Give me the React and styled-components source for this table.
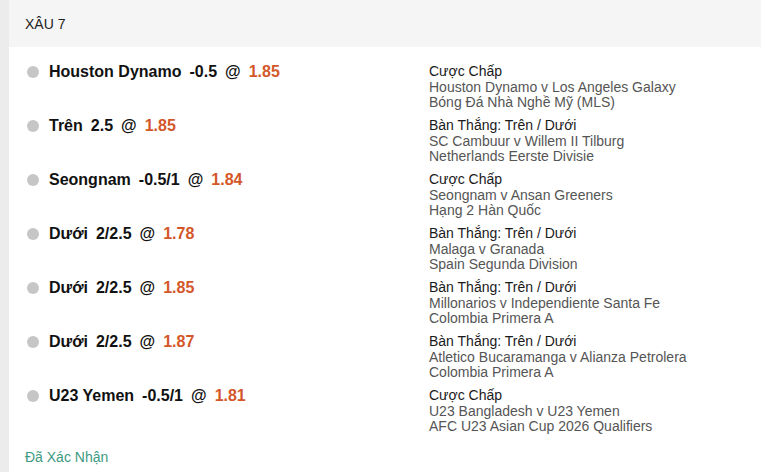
import styled, { createGlobalStyle } from "styled-components";

const GlobalStyle = createGlobalStyle`
    body {
        margin: 0;
        background: #ffffff;
        font-family: "Liberation Sans", Arial, sans-serif;
    }
`;

const Page = styled.div`
    display: flex;
    min-height: 472px;
`;

const Strip = styled.div`
    width: 9px;
    flex-shrink: 0;
    background-color: #ececec;
`;

const Main = styled.div`
    flex: 1;
    display: flex;
    flex-direction: column;
    background-color: #ffffff;
`;

const Header = styled.div`
    height: 47px;
    display: flex;
    align-items: center;
    padding-left: 16px;
    background-color: #f5f5f5;
    font-size: 14px;
    color: #222222;
`;

const List = styled.div`
    display: flex;
    flex-direction: column;
    gap: 7.5px;
    padding: 17px 0 0 18px;
`;

const Row = styled.div`
    display: grid;
    grid-template-columns: 402px 1fr;
    align-items: start;
`;

const Selection = styled.div`
    display: flex;
    align-items: center;
    height: 15px;
    font-size: 16px;
    font-weight: 700;
    color: #111111;
    white-space: nowrap;
`;

const Dot = styled.span`
    width: 12px;
    height: 12px;
    border-radius: 50%;
    background-color: #c6c6c6;
    margin-right: 10px;
    flex-shrink: 0;
`;

const Part = styled.span`
    margin-left: ${(p) => (p.$first ? 0 : 8)}px;
    color: ${(p) => (p.$odds ? "#d4572a" : "inherit")};
`;

const Info = styled.div`
    display: flex;
    flex-direction: column;
    font-size: 14px;
    line-height: 15.5px;
    color: #555555;
`;

const Market = styled.span`
    color: #1a1a1a;
`;

const Footer = styled.div`
    padding: 14px 0 0 16px;
    font-size: 14px;
    color: #3d9a82;
`;

const bets = [
    { team: "Houston Dynamo", line: "-0.5", odds: "1.85", market: "Cược Chấp", match: "Houston Dynamo v Los Angeles Galaxy", league: "Bóng Đá Nhà Nghề Mỹ (MLS)" },
    { team: "Trên", line: "2.5", odds: "1.85", market: "Bàn Thắng: Trên / Dưới", match: "SC Cambuur v Willem II Tilburg", league: "Netherlands Eerste Divisie" },
    { team: "Seongnam", line: "-0.5/1", odds: "1.84", market: "Cược Chấp", match: "Seongnam v Ansan Greeners", league: "Hạng 2 Hàn Quốc" },
    { team: "Dưới", line: "2/2.5", odds: "1.78", market: "Bàn Thắng: Trên / Dưới", match: "Malaga v Granada", league: "Spain Segunda Division" },
    { team: "Dưới", line: "2/2.5", odds: "1.85", market: "Bàn Thắng: Trên / Dưới", match: "Millonarios v Independiente Santa Fe", league: "Colombia Primera A" },
    { team: "Dưới", line: "2/2.5", odds: "1.87", market: "Bàn Thắng: Trên / Dưới", match: "Atletico Bucaramanga v Alianza Petrolera", league: "Colombia Primera A" },
    { team: "U23 Yemen", line: "-0.5/1", odds: "1.81", market: "Cược Chấp", match: "U23 Bangladesh v U23 Yemen", league: "AFC U23 Asian Cup 2026 Qualifiers" },
];

function App() {
    return (
        <>
            <GlobalStyle />
            <Page>
                <Strip />
                <Main>
                    <Header>XÂU 7</Header>
                    <List>
                        {bets.map((bet, i) => (
                            <Row key={i}>
                                <Selection>
                                    <Dot />
                                    <Part $first>{bet.team}</Part>
                                    <Part>{bet.line}</Part>
                                    <Part>@</Part>
                                    <Part $odds>{bet.odds}</Part>
                                </Selection>
                                <Info>
                                    <Market>{bet.market}</Market>
                                    <span>{bet.match}</span>
                                    <span>{bet.league}</span>
                                </Info>
                            </Row>
                        ))}
                    </List>
                    <Footer>Đã Xác Nhận</Footer>
                </Main>
            </Page>
        </>
    );
}

export default App;
